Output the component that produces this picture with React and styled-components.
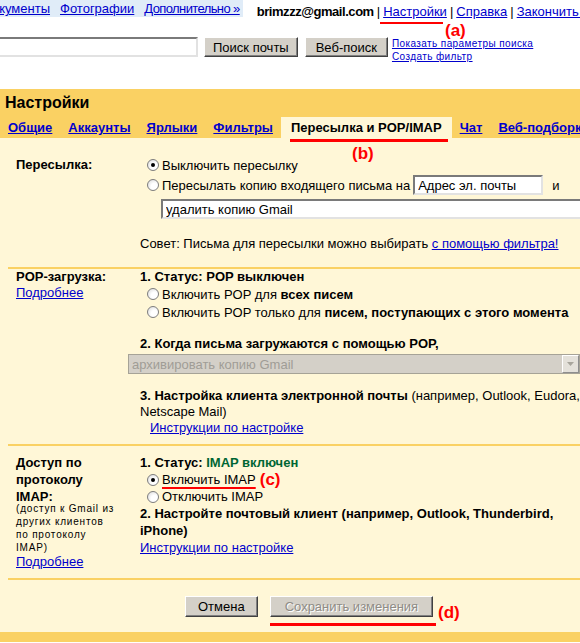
import styled, { createGlobalStyle } from 'styled-components'

const GlobalStyle = createGlobalStyle`
    html, body {
        margin: 0;
        padding: 0;
        background: #fff;
        overflow: hidden;
    }
    body {
        font-family: "Liberation Sans", Arial, sans-serif;
        font-size: 13px;
        color: #000;
    }
    #root {
        width: 760px;
    }
`

const Page = styled.div`
    position: relative;
    width: 760px;
`

const Link = styled.a`
    color: #0000cc;
    text-decoration: underline;
    cursor: pointer;
`

const TopRow = styled.div`
    display: flex;
    align-items: flex-start;
    height: 20px;
    margin-left: -17px;
`

const AppLinks = styled.div`
    display: flex;
    gap: 10px;
    height: 17px;
    line-height: 17px;
    padding-right: 3px;
    background: #e0ecf8;
    white-space: nowrap;
`

const MoreLink = styled(Link)`
    letter-spacing: -0.6px;
`

const UserLinks = styled.div`
    display: flex;
    gap: 3px;
    margin-left: 14px;
    padding-top: 4px;
    line-height: 16px;
    white-space: nowrap;
`

const Email = styled.b`
    letter-spacing: -0.45px;
`

const SearchRow = styled.div`
    display: flex;
    align-items: flex-start;
    height: 26px;
    margin-top: 17px;
    margin-left: -100px;
`

const TextBox = styled.input`
    box-sizing: border-box;
    width: ${props => props.$w}px;
    height: 20px;
    margin: 0;
    padding: 1px 3px;
    border: 2px solid;
    border-color: #7a7a7a #e2e2e2 #e2e2e2 #7a7a7a;
    background: #fff;
    font-family: "Liberation Sans", Arial, sans-serif;
    font-size: 13px;
    color: #000;
    outline: none;
`

const Button = styled.button`
    box-sizing: border-box;
    height: ${props => props.$h || 20}px;
    margin: 0 0 0 ${props => props.$ml || 0}px;
    padding: 0 ${props => props.$px || 8}px;
    border: 1px solid;
    border-color: #fff #404040 #404040 #fff;
    box-shadow: inset -1px -1px #808080;
    background: #d4d0c8;
    font-family: "Liberation Sans", Arial, sans-serif;
    font-size: 13px;
    color: ${props => props.disabled ? '#8f8c86' : '#000'};
    text-shadow: ${props => props.disabled ? '1px 1px #fff' : 'none'};
    white-space: nowrap;
`

const SearchLinks = styled.div`
    display: flex;
    flex-direction: column;
    margin-left: 4px;
    font-size: 10px;
    letter-spacing: 0.4px;
    line-height: 13px;
    white-space: nowrap;
`

const Head = styled.div`
    margin-top: 26px;
    padding-top: 4px;
    background: #fad163;
`

const Title = styled.div`
    padding-left: 5px;
    font-size: 16px;
    font-weight: bold;
    line-height: 20px;
`

const Tabs = styled.div`
    display: flex;
    margin-top: 4px;
    white-space: nowrap;
`

const Tab = styled.div`
    padding: 0 ${props => props.$active ? 10 : 8}px;
    line-height: 21px;
    font-weight: bold;
    background: ${props => props.$active ? '#fff7d7' : 'transparent'};
`

const Content = styled.div`
    background: #fff7d7;
    border-bottom: 10px solid #fad163;
`

const Section = styled.div`
    display: grid;
    grid-template-columns: 124px 1fr;
    margin-left: 8px;
    padding: ${props => props.$pt}px 0 ${props => props.$pb}px 8px;
    border-top: ${props => props.$first ? 'none' : '2px solid #fad163'};
    white-space: nowrap;
`

const Label = styled.div`
    font-weight: bold;
    line-height: ${props => props.$lh || 17}px;
`

const SmallNote = styled.div`
    margin-top: -3px;
    font-size: 10px;
    line-height: 13px;
    letter-spacing: 0.8px;
`

const Line = styled.div`
    margin-top: ${props => props.$mt || 0}px;
    line-height: ${props => props.$lh || 17}px;
    padding-left: ${props => props.$pl || 0}px;
`

const Strong = styled.b`
    font-weight: bold;
`

const Green = styled.b`
    color: #006633;
`

const RadioRow = styled.div`
    display: flex;
    align-items: center;
    gap: 3px;
    height: ${props => props.$h || 17}px;
    padding-left: 7px;
`

const Radio = styled.span`
    box-sizing: border-box;
    display: inline-flex;
    align-items: center;
    justify-content: center;
    flex: none;
    width: 12px;
    height: 12px;
    border-radius: 50%;
    border: 1px solid #7d7d7d;
    background: radial-gradient(circle at 65% 65%, #fff 0, #fff 35%, #d6d6d6 100%);

    &::after {
        content: '';
        display: ${props => props.$checked ? 'block' : 'none'};
        width: 4px;
        height: 4px;
        border-radius: 50%;
        background: #000;
    }
`

const IndentRow = styled.div`
    margin-top: 3px;
    padding-left: 21px;
`

const Gap = styled.span`
    margin: 0 6px;
`

const Select = styled.div`
    box-sizing: border-box;
    display: flex;
    align-items: center;
    width: 452px;
    height: 20px;
    margin: 2px 0 0 -12px;
    padding-left: 3px;
    border: 1px solid #a6a397;
    background: #d4d0c8;
    color: #a09d96;
`

const SelectText = styled.span`
    flex: 1;
`

const SelectArrow = styled.span`
    box-sizing: border-box;
    display: flex;
    align-items: center;
    justify-content: center;
    width: 17px;
    height: 18px;
    border: 1px solid;
    border-color: #fff #8e8e8e #8e8e8e #fff;
    background: #e4e1da;
`

const ImapOn = styled.span`
    text-decoration: underline 2px #ff0000;
    text-underline-offset: 3px;
`

const InlineMark = styled.span`
    margin-left: 1px;
    color: #ff0000;
    font-size: 17px;
    font-weight: bold;
`

const ButtonBar = styled.div`
    display: flex;
    margin-left: 8px;
    padding: 16px 0 15px 177px;
    border-top: 2px solid #fad163;
`

const Mark = styled.div`
    position: absolute;
    left: ${props => props.$x}px;
    top: ${props => props.$y}px;
    color: #ff0000;
    font-size: 17px;
    font-weight: bold;
    line-height: 17px;
`

const RedLine = styled.div`
    position: absolute;
    left: ${props => props.$x}px;
    top: ${props => props.$y}px;
    width: ${props => props.$w}px;
    height: ${props => props.$h || 2}px;
    background: #ff0000;
`

const tabs = ['Общие', 'Аккаунты', 'Ярлыки', 'Фильтры', 'Пересылка и POP/IMAP', 'Чат', 'Веб-подборки']

export default function App() {
    return (
        <Page>
            <GlobalStyle />
            <TopRow>
                <AppLinks>
                    <Link>Документы</Link>
                    <Link>Фотографии</Link>
                    <MoreLink>Дополнительно »</MoreLink>
                </AppLinks>
                <UserLinks>
                    <Email>brimzzz@gmail.com</Email>
                    <span>|</span>
                    <Link>Настройки</Link>
                    <span>|</span>
                    <Link>Справка</Link>
                    <span>|</span>
                    <Link>Закончить работу</Link>
                </UserLinks>
            </TopRow>

            <SearchRow>
                <TextBox $w={298} readOnly value="" />
                <Button $ml={6}>Поиск почты</Button>
                <Button $ml={7} $px={10}>Веб-поиск</Button>
                <SearchLinks>
                    <Link>Показать параметры поиска</Link>
                    <Link>Создать фильтр</Link>
                </SearchLinks>
            </SearchRow>

            <Head>
                <Title>Настройки</Title>
                <Tabs>
                    {tabs.map(t => (
                        <Tab key={t} $active={t === 'Пересылка и POP/IMAP'}>
                            {t === 'Пересылка и POP/IMAP' ? t : <Link>{t}</Link>}
                        </Tab>
                    ))}
                </Tabs>
            </Head>

            <Content>
                <Section $first $pt={18} $pb={15}>
                    <div>
                        <Label $lh={18}>Пересылка:</Label>
                    </div>
                    <div>
                        <RadioRow $h={18}>
                            <Radio $checked />
                            <span>Выключить пересылку</span>
                        </RadioRow>
                        <RadioRow $h={22}>
                            <Radio />
                            <span>Пересылать копию входящего письма на</span>
                            <TextBox $w={130} readOnly value="Адрес эл. почты" />
                            <Gap>и</Gap>
                        </RadioRow>
                        <IndentRow>
                            <TextBox $w={450} readOnly value="удалить копию Gmail" />
                        </IndentRow>
                        <Line $mt={16}>
                            Совет: Письма для пересылки можно выбирать <Link>с помощью фильтра!</Link>
                        </Line>
                    </div>
                </Section>

                <Section $pt={0} $pb={8}>
                    <div>
                        <Label $lh={16}>POP-загрузка:</Label>
                        <Line $lh={16}><Link>Подробнее</Link></Line>
                    </div>
                    <div>
                        <Line $lh={16}><Strong>1. Статус: POP выключен</Strong></Line>
                        <RadioRow $h={18}>
                            <Radio />
                            <span>Включить POP для <Strong>всех писем</Strong></span>
                        </RadioRow>
                        <RadioRow $h={18}>
                            <Radio />
                            <span>Включить POP только для <Strong>писем, поступающих с этого момента</Strong></span>
                        </RadioRow>
                        <Line $lh={16} $mt={15}><Strong>2. Когда письма загружаются с помощью POP,</Strong></Line>
                        <Select>
                            <SelectText>архивировать копию Gmail</SelectText>
                            <SelectArrow>
                                <svg width="7" height="4" viewBox="0 0 7 4">
                                    <path d="M0 0h7L3.5 4z" fill="#a8a59c" />
                                </svg>
                            </SelectArrow>
                        </Select>
                        <Line $lh={16} $mt={14}>
                            <Strong>3. Настройка клиента электронной почты</Strong> (например, Outlook, Eudora,
                            <br />
                            Netscape Mail)
                        </Line>
                        <Line $lh={16} $pl={10}><Link>Инструкции по настройке</Link></Line>
                    </div>
                </Section>

                <Section $pt={8} $pb={8}>
                    <div>
                        <Label>Доступ по<br />протоколу<br />IMAP:</Label>
                        <SmallNote>(доступ к Gmail из<br />других клиентов<br />по протоколу<br />IMAP)</SmallNote>
                        <Line $lh={16}><Link>Подробнее</Link></Line>
                    </div>
                    <div>
                        <Line><Strong>1. Статус: </Strong><Green>IMAP включен</Green></Line>
                        <RadioRow>
                            <Radio $checked />
                            <ImapOn>Включить IMAP</ImapOn>
                            <InlineMark>(c)</InlineMark>
                        </RadioRow>
                        <RadioRow>
                            <Radio />
                            <span>Отключить IMAP</span>
                        </RadioRow>
                        <Line>
                            <Strong>2. Настройте почтовый клиент (например, Outlook, Thunderbird,<br />iPhone)</Strong>
                        </Line>
                        <Line><Link>Инструкции по настройке</Link></Line>
                    </div>
                </Section>

                <ButtonBar>
                    <Button $h={21} $px={12}>Отмена</Button>
                    <Button $h={21} $px={14} $ml={12} disabled>Сохранить изменения</Button>
                </ButtonBar>
            </Content>

            <RedLine $x={380} $y={22} $w={63} />
            <Mark $x={445} $y={22}>(a)</Mark>
            <RedLine $x={290} $y={139} $w={158} $h={3} />
            <Mark $x={352} $y={145}>(b)</Mark>
            <RedLine $x={270} $y={623} $w={166} $h={3} />
            <Mark $x={438} $y={604}>(d)</Mark>
        </Page>
    )
}
